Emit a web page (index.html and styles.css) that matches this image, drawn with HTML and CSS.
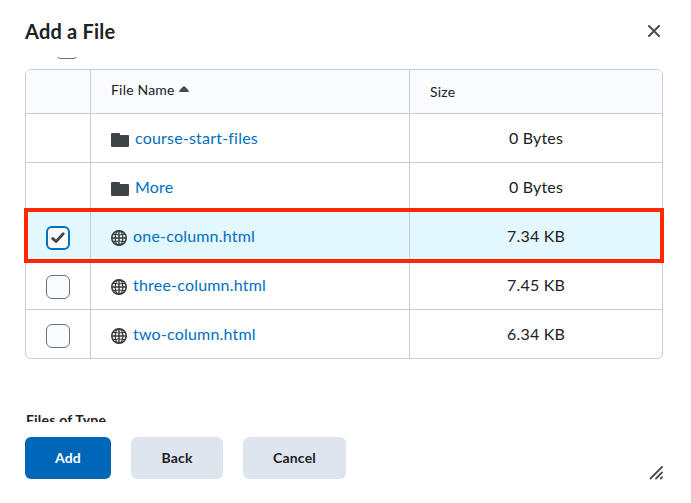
FILE: index.html
```html
<!DOCTYPE html>
<html lang="en">
<head>
<meta charset="utf-8">
<title>Add a File</title>
<link rel="stylesheet" href="styles.css">
</head>
<body>
<svg width="0" height="0" class="defs" aria-hidden="true">
  <symbol id="folder" viewBox="0 0 18 14"><path d="M0 1Q0 0 1 0H8Q9 0 9 1V2H17Q18 2 18 3V13Q18 14 17 14H1Q0 14 0 13Z" fill="#3f4447"/></symbol>
  <symbol id="globe" viewBox="0 0 16 16"><g fill="none" stroke="#36393c"><circle cx="8" cy="8" r="7.2" stroke-width="1.6"/><path d="M8 1V15M1 8H15" stroke-width="1.4"/><ellipse cx="8" cy="8" rx="3.9" ry="7" stroke-width="1.2"/><path d="M2.3 4.4Q8 5.6 13.7 4.4M2.3 11.6Q8 10.4 13.7 11.6" stroke-width="1"/></g></symbol>
</svg>
<main class="dialog">
  <header class="dialog-header">
    <h1>Add a File</h1>
    <button class="close" aria-label="Close"><svg width="12" height="12" viewBox="0 0 12 12"><path d="M1 1L11 11M11 1L1 11" stroke="#494c4e" stroke-width="2" stroke-linecap="round"/></svg></button>
  </header>
  <section class="dialog-body">
    <div class="select-all"><span class="checkbox"></span></div>
    <div class="table">
      <div class="row head"><div></div><div class="name"><span class="label">File Name</span><svg width="10" height="6" viewBox="0 0 10 6"><path d="M.6 4.3L4.1 .6Q5 -.2 5.9 .6L9.4 4.3Q10.4 6 9 6H1Q-.4 6 .6 4.3Z" fill="#494c4e"/></svg></div><div class="size">Size</div></div>
      <div class="row"><div></div><div class="name"><svg class="folder"><use href="#folder"/></svg><a>course-start-files</a></div><div class="size">0 Bytes</div></div>
      <div class="row"><div></div><div class="name"><svg class="folder"><use href="#folder"/></svg><a>More</a></div><div class="size">0 Bytes</div></div>
      <div class="row selected"><div class="pick"><span class="checkbox checked"><svg width="14" height="12" viewBox="0 0 14 12"><path d="M1.7 6.4L5 9.6L12.2 1.8" fill="none" stroke="#3f4447" stroke-width="2.8" stroke-linecap="round" stroke-linejoin="round"/></svg></span></div><div class="name"><svg class="globe"><use href="#globe"/></svg><a>one-column.html</a></div><div class="size">7.34 KB</div></div>
      <div class="row"><div class="pick"><span class="checkbox"></span></div><div class="name"><svg class="globe"><use href="#globe"/></svg><a>three-column.html</a></div><div class="size">7.45 KB</div></div>
      <div class="row"><div class="pick"><span class="checkbox"></span></div><div class="name"><svg class="globe"><use href="#globe"/></svg><a>two-column.html</a></div><div class="size">6.34 KB</div></div>
    </div>
    <h2>Files of Type</h2>
  </section>
  <footer class="actions">
    <button class="btn primary">Add</button>
    <button class="btn back">Back</button>
    <button class="btn cancel">Cancel</button>
    <svg class="grip" width="14" height="14" viewBox="0 0 14 14"><path d="M1.5 12.5L13 1M7 12.5L13 6.5M11.8 12.5L13 11.3" stroke="#494c4e" stroke-width="1.8" stroke-linecap="round"/></svg>
  </footer>
</main>
</body>
</html>
```
FILE: styles.css
```css
* { box-sizing: border-box; }
body { margin: 0; background: #fff; color: #202122; font-family: Lato, sans-serif; }
.defs { position: absolute; }
.dialog { display: flex; flex-direction: column; width: 691px; height: 503px; overflow: hidden; }
.dialog-header { display: flex; justify-content: space-between; height: 57px; padding: 16px 31px 0 25px; }
h1 { margin: 0; font-size: 20px; line-height: 30px; font-weight: 700; letter-spacing: .2px; }
button { border: 0; font-family: inherit; }
.close { display: flex; align-items: center; width: 12px; height: 30px; padding: 0; background: none; }
.dialog-body { height: 365px; padding: 0 28px 0 25px; overflow: hidden; }
.select-all { display: flex; align-items: flex-start; height: 12px; padding-left: 30px; }
.select-all .checkbox { margin-top: -22px; }
.checkbox { display: flex; align-items: center; justify-content: center; flex: none; width: 24px; height: 24px; border: 1px solid #6e7376; border-radius: 6px; background: #f9fbff; }
.checked { border: 2px solid #006fbf; }
.table { height: 290px; border: 1px solid #c5ced9; border-radius: 6px; }
.row { position: relative; display: grid; grid-template-columns: 65px 319px 1fr; height: 49px; border-bottom: 1px solid #c5ced9; font-size: 16px; letter-spacing: .2px; }
.row:last-child { border-bottom: 0; height: 48px; }
.row > div { display: flex; align-items: center; }
.row > div:not(:last-child) { border-right: 1px solid #c5ced9; }
.head { height: 44px; background: #f9fbff; border-radius: 5px 5px 0 0; font-size: 14px; }
.row > .name { padding: 0 0 2px 20px; }
.row > .size { justify-content: center; padding-bottom: 2px; }
.head > .name { padding-bottom: 4px; gap: 4px; }
.head > .name svg { margin-bottom: 1px; }
.row.head > .size { justify-content: flex-start; padding: 0 0 0 20px; }
.row > .pick { padding: 4px 0 0 20px; }
.name a { color: #006fbf; }
.folder { width: 18px; height: 14px; margin: 6px 6px 0 0; }
.globe { width: 16px; height: 16px; margin: 6px 6px 0 0; }
.row.head > .name { padding-bottom: 5px; }
.selected { background: #e3f7ff; }
.selected::after { content: ""; position: absolute; inset: -4px -2px -3px; border: 4px solid #ff2600; z-index: 1; }
h2 { margin: 51px 0 0 1px; font-size: 14px; line-height: 20px; font-weight: 700; letter-spacing: .2px; }
.actions { display: flex; gap: 20px; padding: 15px 28px 0 25px; }
.btn { width: 86px; height: 42px; padding: 0 0 2px; border-radius: 6px; background: #dfe5ef; color: #202122; font-size: 14px; font-weight: 700; letter-spacing: .2px; }
.primary { background: #0066b8; color: #fff; }
.back { width: 92px; }
.cancel { width: 103px; }
.grip { align-self: flex-end; margin: 0 0 -1px auto; }
```
